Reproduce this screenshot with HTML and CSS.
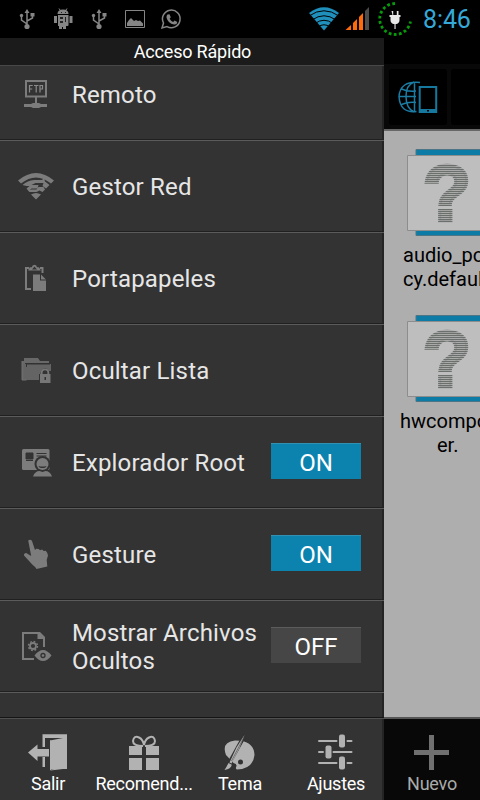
FILE: index.html
```html
<!DOCTYPE html>
<html lang="es">
<head>
<meta charset="utf-8">
<title>Acceso Rápido</title>
<link rel="stylesheet" href="styles.css">
</head>
<body>
<div class="screen">
  <header class="status">
    <div class="notifications">
      <svg class="note" viewBox="0 0 36 38"><g fill="none" stroke="#858585" stroke-width="1.5"><path d="M18 27V12M18 24L12.500 20V16M18 21L23.500 18V15"/></g><g fill="#858585"><path d="M18 9l2.500 4h-5z"/><circle cx="18" cy="26.500" r="2.600"/><circle cx="12.500" cy="15.500" r="1.700"/><path d="M21.500 13h4v3.500h-4z"/></g></svg>
      <svg class="note" viewBox="0 0 36 38"><path d="M14 8.500l2 3M22 8.500l-2 3" stroke="#858585"/><path d="M12.500 14q0-4.500 5.500-4.500t5.500 4.500zM13 15h10.500v10q0 1-1 1H21v3h-3v-2h-1v2h-3v-3h-1zM9 16h3v7H9zM24.500 16h3v7h-3z" fill="#858585"/><path d="M15 17h3v2h-3zM20 17h1v5h-1zM15 21h3v2h-3zM16 12h1v1h-1zM20 12h1v1h-1z" fill="#222"/></svg>
      <svg class="note" viewBox="0 0 36 38"><g fill="none" stroke="#858585" stroke-width="1.500"><path d="M18 27V12M18 24L12.500 20V16M18 21L23.500 18V15"/></g><g fill="#858585"><path d="M18 9l2.500 4h-5z"/><circle cx="18" cy="26.500" r="2.600"/><circle cx="12.500" cy="15.500" r="1.700"/><path d="M21.500 13h4v3.500h-4z"/></g></svg>
      <svg class="note" viewBox="0 0 36 38"><path d="M8.500 10.500h19v17h-19z" fill="none" stroke="#858585"/><path d="M10 26v-3l2-3 2-2 3 3 2-1 2 1 2-.5 3 3V26z" fill="#858585"/></svg>
      <svg class="note" viewBox="0 0 36 38"><path d="M9 28l1.500-5a8.800 8.800 0 1 1 3.500 3.600z" fill="none" stroke="#858585" stroke-width="1.500"/><path d="M14.500 14.500l2-.3 1.300 3-1.200 1.500q1.500 2.500 3.500 3.200l1.500-1.500 2.700 1.500q-.3 3-3.300 2.600-6-1-7.500-7-.2-2 1-3z" fill="#858585"/></svg>
    </div>
    <div class="system">
      <svg class="wifi" width="32" height="26" viewBox="308 6 32 26"><path d="M309 13q15-11.500 30 0l-15 17.500z" fill="#1f8fbb"/><g fill="none" stroke="#000" stroke-width="1"><path d="M309 16q15-10.500 30 0M312 20q12-8.500 24 0M315 23.500q9-6.500 18 0M318 27q6-4.500 12 0"/></g></svg>
      <svg class="signal" width="26" height="26" viewBox="345 6 26 26"><path d="M345.500 30l5.500-5v5zM353 23l4-4v11h-4zM359 17l4-4v17h-4z" fill="#ff6a0a"/><path d="M365 11l4-4v23h-4z" fill="#4b4b4b"/></svg>
      <svg class="battery" width="36" height="38" viewBox="377 0 36 38"><path d="M395 3.500a15.500 15.500 0 1 0 15.500 18" fill="none" stroke="#079a0b" stroke-width="2.800" stroke-dasharray="2.800 2.400"/><path d="M391.500 11h1.700v4h3.600v-4h1.700v4h2v2h-1v3q0 3-3 4h-3q-3-1-3-4v-3h-1v-2h3z" fill="#e8e8e8"/><path d="M394.200 24h1.700v5h-1.700z" fill="#999"/></svg>
      <time class="clock">8:46</time>
    </div>
  </header>

  <div class="body">
    <aside class="drawer">
      <h1 class="drawer-title">Acceso Rápido</h1>
      <div class="list">
        <div class="row row-first">
          <svg class="icon" viewBox="0 0 48 48"><path d="M14 10h20v15.500H14zM24 26v8" fill="none" stroke="#7c7c7c" stroke-width="2"/><path d="M12 33h7l2-1h6l2 1h6v3h-6l-2 1h-6l-2-1h-7z" fill="#7c7c7c"/><path d="M17.500 21.500v-7h3.200M17.500 18h2.700M22 14.500h4.500M24.200 14.500v7M28 21.500v-7h2.500v3.500H28" fill="none" stroke="#8a8a8a" stroke-width="1.200"/></svg>
          <span class="label">Remoto</span>
        </div>
        <div class="row">
          <svg class="icon" viewBox="0 0 48 48"><path d="M6 17.500q18-15 36 0l-3 3q-15-12-30 0zM10.500 22q5-4.500 11.500-5h8l2-2 1 3.500 4.500 3.500-3.500 3.500-3.500-2.500 1-3h-8l-4 2h7l-1 3.500h-6l-3 2.500-2-2.500 3-2.500h-3zM16 27.500l3.500-1h5l2-2.500h5l1.500 2.500-2.500 2.500-3-1.500-3 1.500h-7zM19 31.500q5-3 10 0l-5 5z" fill="#7c7c7c"/></svg>
          <span class="label">Gestor Red</span>
        </div>
        <div class="row">
          <svg class="icon" viewBox="0 0 48 48"><path d="M17 13h-3v21h5M28 13h2.500v5" fill="none" stroke="#7c7c7c" stroke-width="2"/><path d="M16 15.500l1.800-3.200h2q.4-2.500 2.700-2.500t2.500 2.500h2l1.800 3.200zM21 19.500h7v6h6V36H21zM29 19.500l5 5h-5z" fill="#7c7c7c"/><path d="M20 14.500l2.500-3 2.500 3z" fill="#333"/></svg>
          <span class="label">Portapapeles</span>
        </div>
        <div class="row">
          <svg class="icon" viewBox="0 0 48 48"><path d="M10 14h2v-3h14l2 3h9v2H13v17h-3z" fill="#686868"/><path d="M14.500 17H39v7h-2q-2-3.500-5-2.500-3.500 1-3.500 5.500H27v6H11.500V17z" fill="#646464"/><path d="M10 14v19h4.500" stroke="#707070" fill="none"/><path d="M14.500 20v-3H38" stroke="#333" fill="none"/><path d="M29.700 28v-3q.3-2.700 3.300-2.700t3.300 2.700v3" fill="#333" stroke="#777" stroke-width="1.800"/><path d="M28 27h10.500v9H28z" fill="#777"/><path d="M32.500 30h1.500v3h-1.500z" fill="#333"/></svg>
          <span class="label">Ocultar Lista</span>
        </div>
        <div class="row">
          <svg class="icon" viewBox="0 0 48 48"><rect x="10" y="10" width="27.500" height="21" rx="1.500" fill="#7c7c7c"/><path d="M14 14h7v6h-7zM14 21.500h7M24.500 14.500h10M24.500 17h10" fill="#333" stroke="#333" stroke-width="1"/><circle cx="30.500" cy="25" r="8" fill="#333"/><circle cx="30.500" cy="25" r="6" fill="#7c7c7c"/><path d="M21 37.500q2-5.500 6.500-5.500l3 1 3-1q4.500 0 6.500 5.500z" fill="#7c7c7c"/><path d="M26.500 27q4 1 8 0-.5 2-4 2t-4-2z" fill="#333"/></svg>
          <span class="label">Explorador Root</span><span class="switch on">ON</span>
        </div>
        <div class="row">
          <svg class="icon" viewBox="0 0 48 48"><path d="M16.200 9.500q2.300-1.800 3.800.5l3 9 1.200-1.200 2.500.2 1.300 1.200 2-.8 1.800 1.600 2-.2 1.500 2.200.7 2.500-1.300 4.500.6 6.500-10.800 2.500q-1-2-4-4.200L12 24.500q-.3-2.500 2.200-2.500l5 3z" fill="#7c7c7c"/></svg>
          <span class="label">Gesture</span><span class="switch on">ON</span>
        </div>
        <div class="row">
          <svg class="icon" viewBox="0 0 48 48"><path d="M22 36H11V10h15M32 16v8" fill="none" stroke="#7c7c7c" stroke-width="2"/><path d="M25.500 9H28l5 5v2h-7.500z" fill="#7c7c7c"/><circle cx="21" cy="23" r="3" fill="none" stroke="#7c7c7c" stroke-width="1.800"/><circle cx="21" cy="23" r="4.500" fill="none" stroke="#7c7c7c" stroke-width="1.500" stroke-dasharray="1.800 1.734"/><path d="M22.500 32.500q8.500-11 17 0-8.500 11-17 0z" fill="#7c7c7c"/><circle cx="31" cy="32.500" r="2" fill="#7c7c7c" stroke="#333" stroke-width="1.300"/></svg>
          <span class="label">Mostrar Archivos Ocultos</span><span class="switch">OFF</span>
        </div>
      </div>
      <nav class="toolbar">
        <div class="tool"><svg viewBox="0 0 48 48"><path d="M18.500 20V7.300H43V42H26V13.500L39 11H21v9zM18.500 30H21v10h-2.500z" fill="#b2b2b2"/><path d="M4 25.500l9.500-8v4.500H25v7.500H13.500v4.500z" fill="#b2b2b2"/><path d="M26.500 13.500V43L43 41" fill="none" stroke="#b2b2b2"/></svg><span>Salir</span></div>
        <div class="tool"><svg viewBox="0 0 48 48"><path d="M9 19h13v9H9zM26 19h13v9H26zM9 31h13v12H9zM26 31h13v12H26z" fill="#b2b2b2"/><path d="M23 19Q13 19 13 14q1-6 6-3.500 4 2 5 7.500 1-5.500 5-7.500 5-2.500 6 3.500 0 5-10 5" fill="none" stroke="#b2b2b2" stroke-width="2"/></svg><span>Recomend...</span></div>
        <div class="tool"><svg viewBox="0 0 48 48"><path d="M10 28Q5 15 19 13.500l6 .3Q38 16 38.500 28 37 42 21 42.500q-2-.5-.5-3.500.5-2-3-3zM22 35a2.500 2.500 0 1 0 5 0 2.500 2.500 0 1 0-5 0" fill="#b2b2b2" fill-rule="evenodd"/><path d="M28.500 8.500l-16 29" stroke="#333" stroke-width="4"/><path d="M28.500 8l-5 13-8 15.500-2-1 7-15z" fill="#b2b2b2"/><path d="M28 10l-12.500 24" stroke="#444" stroke-width=".6"/><path d="M12.500 36l3.300 1.800Q15 42 8.500 43q2-3 4-7z" fill="#b2b2b2"/></svg><span>Tema</span></div>
        <div class="tool"><svg viewBox="0 0 48 48"><path d="M7 14h17.500M35.500 14h4M7 25h4M21.500 25h18M7 36h17.500M35.500 36h4" stroke="#b2b2b2" stroke-width="2" stroke-linecap="round"/><g fill="#b2b2b2"><rect x="27" y="7.500" width="6" height="13" rx="2"/><rect x="13.500" y="18.500" width="6" height="13" rx="2"/><rect x="27" y="29.500" width="6" height="13" rx="2"/></g></svg><span>Ajustes</span></div>
      </nav>
    </aside>

    <main class="explorer">
      <div class="tabs">
        <div class="tab"><svg viewBox="0 0 58 56"><g fill="none" stroke="#1b7ca4" stroke-width="1.500"><path d="M31 13.500q-20-2-21 14 1 17 17.500 15M25.500 13v30M25 13q-8 3-8 14.500T25 43M10 27.500h17M12.500 20q7 3 14.500 2M12.500 35.500q7-3 14.500-2"/></g><rect x="30.700" y="18" width="16.500" height="25" fill="#000" stroke="#16789f" stroke-width="2"/><path d="M30 40h18v4H30z" fill="#16789f"/><path d="M38 41h2v1.500h-2z" fill="#000"/></svg></div>
        <div class="tab"></div>
      </div>
      <div class="files">
        <figure class="file">
          <svg class="thumb" viewBox="0 0 74 88"><defs><pattern id="lines" width="74" height="2" patternUnits="userSpaceOnUse"><path d="M0 0h74v1.200H0z" fill="#6c706c"/></pattern></defs><path d="M9 .5h65v86H9z" fill="#0c7ba5" stroke="#4c7686"/><path d="M.5 6.500H74v75H.5z" fill="#bebebe" stroke="#8d8d8d"/><text class="unknown" x="15.500" y="72">?</text></svg>
          <figcaption>audio_po<br>cy.defaul</figcaption>
        </figure>
        <figure class="file">
          <svg class="thumb" viewBox="0 0 74 88"><path d="M9 .5h65v86H9z" fill="#0c7ba5" stroke="#4c7686"/><path d="M.5 6.500H74v75H.5z" fill="#bebebe" stroke="#8d8d8d"/><text class="unknown" x="15.500" y="72">?</text></svg>
          <figcaption class="host">hwcompo<br><span class="tail">er.</span></figcaption>
        </figure>
      </div>
      <div class="new tool"><svg viewBox="0 0 48 48"><path d="M23.500 8v35M6 25.500h35" stroke="#707070" stroke-width="5"/></svg><span>Nuevo</span></div>
    </main>
  </div>
</div>
</body>
</html>
```

FILE: styles.css
```css
* { box-sizing: border-box; }
body { margin: 0; background: #000; font-family: Roboto, "Liberation Sans", sans-serif; }
svg { display: block; flex: none; }
.screen { width: 480px; height: 800px; overflow: hidden; display: flex; flex-direction: column; }

.status { height: 38px; flex: none; display: flex; justify-content: space-between; }
.notifications { display: flex; padding-left: 9px; }
.note { width: 36px; height: 38px; }
.system { display: flex; align-items: center; padding-right: 9px; }
.signal { margin-left: 5px; }
.battery { margin-left: 6px; }
.clock { margin-left: 10px; width: 48px; padding-top: 2px; font-size: 25px; line-height: 38px; color: #35a8d8; white-space: nowrap; letter-spacing: -.1px; }

.body { flex: 1; min-height: 0; display: flex; }
.drawer { width: 384px; flex: none; display: flex; flex-direction: column; background: #333; box-shadow: inset -2px 0 #242424; }
.drawer-title { height: 27px; flex: none; margin: 0; padding-left: 1px; background: #1b1b1b; color: #fff; font-size: 18px; font-weight: 400; line-height: 28px; letter-spacing: -.2px; text-align: center; }
.list { height: 652px; flex: none; overflow: hidden; border-top: 1px solid #484848; }
.row { height: 92px; display: flex; align-items: center; padding: 0 23px 0 12px; border-bottom: 1px solid #5b5b5b; box-shadow: inset 0 -1px #202020; }
.row-first { margin-top: -17px; }
.icon { width: 48px; height: 48px; }
.label { flex: 1; margin-left: 12px; color: #e6e6e6; font-size: 24px; line-height: 28px; letter-spacing: .17px; }
.switch { width: 90px; height: 36px; flex: none; margin: -4px 0 0 -20px; background: #464646; border-top: 1px solid #5c5c5c; color: #fff; font-size: 24px; line-height: 38px; text-align: center; }
.switch.on { background: #0c83af; border-top-color: #3191b3; }

.toolbar { flex: 1; display: flex; background: #333; border-top: 1px solid #151515; box-shadow: inset 0 1px #505050, inset -2px 0 #242424; }
.tool { width: 96px; flex: none; display: flex; flex-direction: column; align-items: center; padding-top: 9px; color: #fff; font-size: 18px; line-height: 17px; letter-spacing: -.25px; white-space: nowrap; }
.tool svg { width: 48px; height: 48px; }

.explorer { width: 96px; display: flex; flex-direction: column; overflow: hidden; background: #aeaeae; }
.tabs { height: 93px; flex: none; display: flex; gap: 4px; padding: 31px 0 5px 5px; background: linear-gradient(#000 26px, #080808 26px); border-bottom: 2px solid #666; }
.tab { width: 58px; height: 56px; flex: none; background: #000; border-radius: 3px; }
.files { height: 586px; flex: none; padding: 18px 0 0 16px; }
.file { height: 166px; margin: 0 0 0 7px; }
.thumb { width: 74px; height: 88px; }
.unknown { font: 700 80px "Liberation Sans", sans-serif; fill: url(#lines); stroke: url(#lines); stroke-width: 3px; }
figcaption { margin: 6px 0 0 -4px; color: #000; font-size: 20px; line-height: 24px; white-space: nowrap; }
.host { margin-left: -7px; }
.tail { margin-left: 37px; }
.new { height: 83px; background: #080808; border-top: 2px solid #555; padding-top: 8px; color: #aaa; }
```
